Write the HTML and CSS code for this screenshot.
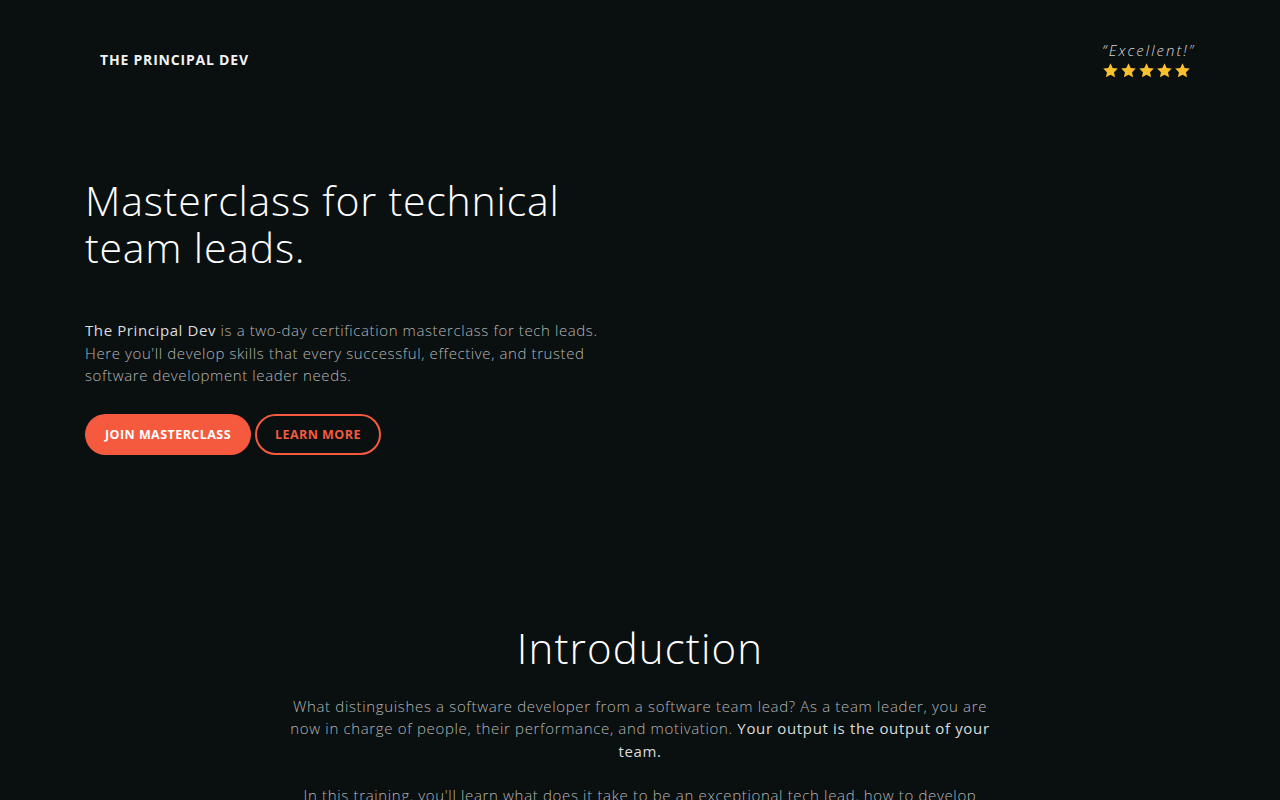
FILE: index.html
```html
<!DOCTYPE html>
<html lang="en">
<head>
<meta charset="utf-8">
<title>The Principal Dev</title>
<link rel="stylesheet" href="styles.css">
</head>
<body>
<header class="topbar">
  <div class="logo">THE PRINCIPAL DEV</div>
  <div class="rating">
    <div class="quote">“Excellent!”</div>
    <div class="stars">
      <svg viewBox="0 0 24 24" class="star"><path d="M12 1.8l3.1 6.6 7.2.9-5.3 5 1.4 7.1L12 17.9l-6.4 3.5L7 14.3l-5.3-5 7.2-.9z"/></svg>
      <svg viewBox="0 0 24 24" class="star"><path d="M12 1.8l3.1 6.6 7.2.9-5.3 5 1.4 7.1L12 17.9l-6.4 3.5L7 14.3l-5.3-5 7.2-.9z"/></svg>
      <svg viewBox="0 0 24 24" class="star"><path d="M12 1.8l3.1 6.6 7.2.9-5.3 5 1.4 7.1L12 17.9l-6.4 3.5L7 14.3l-5.3-5 7.2-.9z"/></svg>
      <svg viewBox="0 0 24 24" class="star"><path d="M12 1.8l3.1 6.6 7.2.9-5.3 5 1.4 7.1L12 17.9l-6.4 3.5L7 14.3l-5.3-5 7.2-.9z"/></svg>
      <svg viewBox="0 0 24 24" class="star"><path d="M12 1.8l3.1 6.6 7.2.9-5.3 5 1.4 7.1L12 17.9l-6.4 3.5L7 14.3l-5.3-5 7.2-.9z"/></svg>
    </div>
  </div>
</header>

<section class="hero">
  <h1 class="hero-title">Masterclass for technical<br>team leads.</h1>
  <p class="hero-text"><strong>The Principal Dev</strong> is a two-day certification masterclass for tech leads. Here you'll develop skills that every successful, effective, and trusted software development leader needs.</p>
  <div class="actions">
    <a class="btn btn-primary" href="#">JOIN MASTERCLASS</a>
    <a class="btn btn-outline" href="#">LEARN MORE</a>
  </div>
</section>

<section class="intro">
  <h2 class="intro-title">Introduction</h2>
  <p class="intro-text">What distinguishes a software developer from a software team lead? As a team leader, you are now in charge of people, their performance, and motivation. <strong>Your output is the output of your team.</strong></p>
  <p class="intro-text">In this training, you'll learn what does it take to be an exceptional tech lead, how to develop your team and lead them to success.</p>
</section>
</body>
</html>
```

FILE: styles.css
```css
* { box-sizing: border-box; }
html, body { margin: 0; padding: 0; }
body {
  background: #0a0f10;
  color: #ffffff;
  font-family: "Open Sans", "Noto Sans", sans-serif;
  overflow: hidden;
  height: 800px;
}
.topbar {
  display: flex;
  justify-content: space-between;
  align-items: flex-start;
  padding: 40px 85px 0 100px;
}
.logo {
  font-weight: 700;
  font-size: 14px;
  letter-spacing: 0.8px;
  color: #f2f2f2;
  margin-top: 10px;
}
.rating {
  display: flex;
  flex-direction: column;
  align-items: flex-start;
}
.quote {
  font-style: italic;
  font-weight: 300;
  font-size: 15px;
  letter-spacing: 2px;
  color: #d6d6d6;
  line-height: 20px;
}
.stars {
  display: flex;
  gap: 1px;
  margin-top: 2px;
}
.star {
  width: 17px;
  height: 17px;
  fill: #fbc02d;
}
.hero {
  padding: 98px 0 0 85px;
}
.hero-title {
  margin: 0;
  font-weight: 300;
  font-size: 41px;
  line-height: 47px;
  letter-spacing: 0.8px;
  color: #ffffff;
}
.hero-text {
  margin: 48px 0 0;
  width: 535px;
  font-size: 15px;
  font-weight: 300;
  line-height: 22.5px;
  letter-spacing: 0.6px;
  color: #b4b6b7;
}
.hero-text strong, .intro-text strong {
  font-weight: 400;
  color: #dcdcdc;
}
.actions {
  display: flex;
  gap: 4px;
  margin-top: 27px;
}
.btn {
  display: inline-flex;
  align-items: center;
  justify-content: center;
  height: 41px;
  border-radius: 21px;
  font-size: 12.5px;
  font-weight: 700;
  letter-spacing: 0.45px;
  text-decoration: none;
}
.btn-primary {
  background: #f55a3f;
  color: #ffffff;
  padding: 0 20px;
}
.btn-outline {
  border: 2px solid #f55a3f;
  color: #f55a3f;
  padding: 0 18px;
}
.intro {
  margin-top: 169px;
  display: flex;
  flex-direction: column;
  align-items: center;
}
.intro-title {
  margin: 0;
  font-weight: 300;
  font-size: 42px;
  line-height: 48px;
  letter-spacing: 1.1px;
}
.intro-text {
  width: 700px;
  margin: 23px 0 0;
  text-align: center;
  font-size: 15px;
  font-weight: 300;
  line-height: 22.5px;
  letter-spacing: 0.66px;
  color: #b4b6b7;
}
.intro-text + .intro-text { margin-top: 22px; }
```
